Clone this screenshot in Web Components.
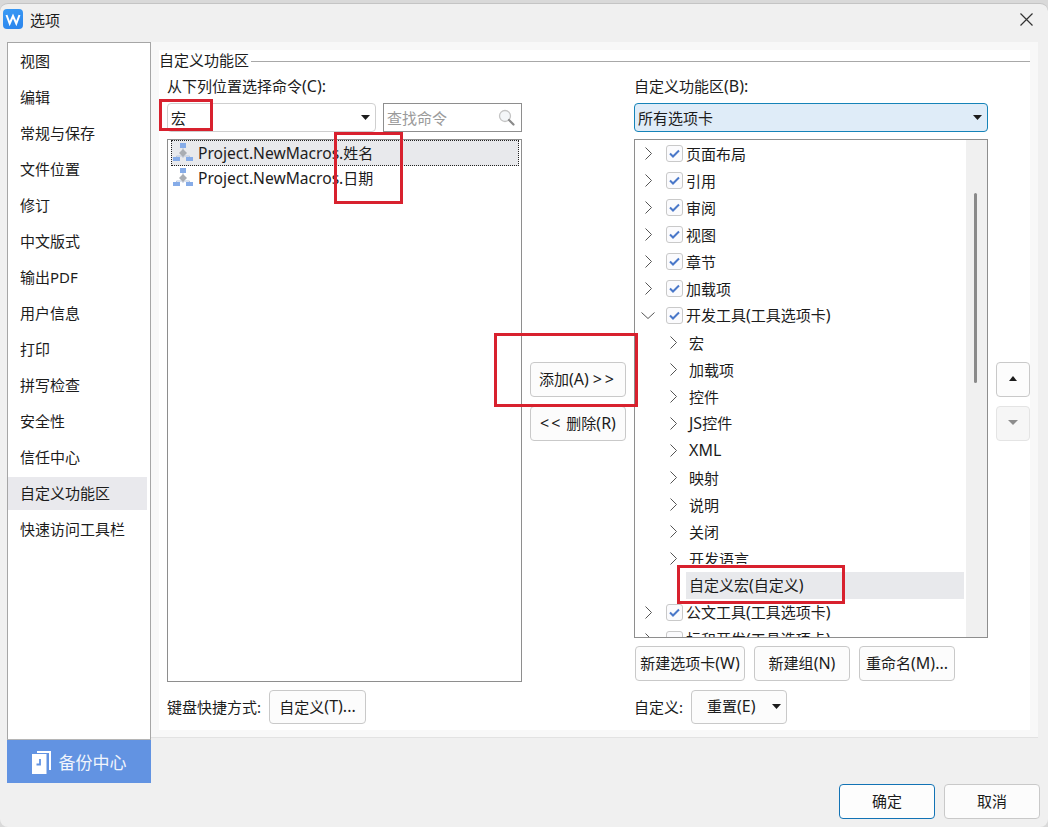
<!DOCTYPE html>
<html lang="zh-CN">
<head>
<meta charset="utf-8">
<title>选项</title>
<style>
    html, body {
        margin: 0;
        height: 100%;
    }
    body {
        background: #d9d9d9;
        color: #1c1c1c;
        font-family: "Noto Sans", "Noto Sans CJK SC", sans-serif;
        font-size: 15px;
        overflow: hidden;
    }
</style>
</head>
<body>
<wps-dialog></wps-dialog>
<script>
const CARET = `<svg width="9" height="5" viewBox="0 0 9 5" style="display:block"><path d="M0 0h9L4.5 5z" fill="currentColor"/></svg>`
const ARROW_UP = `<svg width="8" height="5" viewBox="0 0 8 5" style="display:block"><path d="M0 5h8L4 0z" fill="currentColor"/></svg>`
const ARROW_DOWN = `<svg width="10" height="5" viewBox="0 0 10 5" style="display:block"><path d="M0 0h10L5 5z" fill="currentColor"/></svg>`

// latin runs are wider in the reference than in the cjk font, so they get a bigger size
const lat = text => text.replace(/[!-~]+/g, run => `<span class="l">${run}</span>`)

class WpsAnnotation extends HTMLElement {
    constructor() {
        super()
        this.attachShadow({ mode: 'open' })
    }

    connectedCallback() {
        const [x, y, w, h] = this.getAttribute('box').split(',')
        this.shadowRoot.innerHTML = `
            <style>
                :host {
                    position: absolute;
                    left: ${x}px;
                    top: ${y}px;
                    width: ${w}px;
                    height: ${h}px;
                    box-sizing: border-box;
                    border: 3px solid #d8212e;
                    pointer-events: none;
                    z-index: 5;
                }
            </style>
        `
    }
}

class WpsButton extends HTMLElement {
    constructor() {
        super()
        this.attachShadow({ mode: 'open' })
        this.shadowRoot.innerHTML = `
            <style>
                :host {
                    display: flex;
                    align-items: center;
                    justify-content: center;
                    flex: none;
                    box-sizing: border-box;
                    height: 35px;
                    padding-bottom: 2px;
                    border: 1px solid #c9c9c9;
                    border-radius: 4px;
                    background: #fcfcfc;
                    white-space: nowrap;
                }
                :host([primary]) {
                    border-color: #1273b5;
                    background: #fdfdfd;
                }
                :host([disabled]) {
                    border-color: #e4e4e4;
                    background: #f6f6f6;
                    color: #8d8d8d;
                }
            </style>
            <slot></slot>
        `
    }
}

class WpsSelect extends HTMLElement {
    constructor() {
        super()
        this.attachShadow({ mode: 'open' })
        this.shadowRoot.innerHTML = `
            <style>
                :host {
                    display: flex;
                    align-items: center;
                    justify-content: space-between;
                    box-sizing: border-box;
                    height: 29px;
                    padding: 0 5px 1px 3px;
                    border: 1px solid #cfcfcf;
                    border-radius: 4px;
                    background: #fff;
                }
                :host([focused]) {
                    border-color: #1583b8;
                    background: #dfecf8;
                }
            </style>
            <slot></slot>
            ${CARET}
        `
    }
}

class WpsSearch extends HTMLElement {
    constructor() {
        super()
        this.attachShadow({ mode: 'open' })
        this.shadowRoot.innerHTML = `
            <style>
                :host {
                    display: flex;
                    align-items: center;
                    justify-content: space-between;
                    box-sizing: border-box;
                    width: 139px;
                    height: 29px;
                    padding: 0 6px 1px 3px;
                    border: 1px solid #8e8e8e;
                    background: #fff;
                    color: #9a9a9a;
                }
            </style>
            <span>查找命令</span>
            <svg width="17" height="17" viewBox="0 0 17 17">
                <circle cx="7" cy="7" r="5.5" fill="#f4f6f8" stroke="#c4c4c4" stroke-width="1.3"/>
                <path d="M11 11l4.5 4.5" stroke="#8a8a8a" stroke-width="2.2" stroke-linecap="round"/>
            </svg>
        `
    }
}

class WpsNavItem extends HTMLElement {
    constructor() {
        super()
        this.attachShadow({ mode: 'open' })
        this.shadowRoot.innerHTML = `
            <style>
                :host {
                    display: flex;
                    align-items: center;
                    box-sizing: border-box;
                    height: 36px;
                    padding: 0 0 2px 12px;
                }
                :host([selected]) {
                    background: linear-gradient(#e9e9ed, #e9e9ed) 0 2px / 139px 33px no-repeat;
                }
            </style>
            <slot></slot>
        `
    }
}

class WpsSidebar extends HTMLElement {
    constructor() {
        super()
        this.attachShadow({ mode: 'open' })
        const items = ['视图', '编辑', '常规与保存', '文件位置', '修订', '中文版式', '输出PDF', '用户信息', '打印', '拼写检查', '安全性', '信任中心', '自定义功能区', '快速访问工具栏']
        this.shadowRoot.innerHTML = `
            <style>
                :host {
                    display: flex;
                    flex-direction: column;
                    flex: none;
                    width: 144px;
                    margin-left: 7px;
                }
                .nav {
                    box-sizing: border-box;
                    height: 698px;
                    border: 1px solid #a6a6a6;
                    border-bottom-color: #b5b5b5;
                    background: #fff;
                }
                .backup {
                    display: flex;
                    align-items: center;
                    justify-content: center;
                    gap: 7px;
                    height: 43px;
                    background: #6293e2;
                    color: #f1f5fc;
                    font-size: 17px;
                }
            </style>
            <div class="nav">
                ${items.map(item => `<wps-nav-item ${item === '自定义功能区' ? 'selected' : ''}>${item}</wps-nav-item>`).join('')}
            </div>
            <div class="backup">
                <svg width="20" height="24" viewBox="0 0 20 24">
                    <path d="M5 1h14v19h-2V3H5z" fill="#fff"/>
                    <path d="M0 4h14.500v20H0z" fill="#fff"/>
                    <path d="M8 9v5.500H4.500" fill="none" stroke="#6293e2" stroke-width="1.800"/>
                </svg>
                <span>备份中心</span>
            </div>
        `
    }
}

class WpsTitlebar extends HTMLElement {
    constructor() {
        super()
        this.attachShadow({ mode: 'open' })
        this.shadowRoot.innerHTML = `
            <style>
                :host {
                    display: flex;
                    align-items: center;
                    flex: none;
                    box-sizing: border-box;
                    height: 38px;
                    padding: 0 15px 8px 3px;
                    gap: 7px;
                }
                .logo {
                    width: 20px;
                    height: 20px;
                    border-radius: 4px;
                    background: linear-gradient(160deg, #3a9bf5, #2b84ec);
                }
                .title {
                    flex: 1;
                }
            </style>
            <svg class="logo" viewBox="0 0 20 20">
                <path d="M3.500 6l3.200 8.500L10 7l3.300 7.500L16.500 6" fill="none" stroke="#fff" stroke-width="2"/>
            </svg>
            <span class="title">选项</span>
            <svg width="13" height="13" viewBox="0 0 13 13">
                <path d="M.5.500l12 12M12.500.500l-12 12" stroke="#333" stroke-width="1.200"/>
            </svg>
        `
    }
}

class WpsMacroRow extends HTMLElement {
    constructor() {
        super()
        this.attachShadow({ mode: 'open' })
        this.shadowRoot.innerHTML = `
            <style>
                :host {
                    display: flex;
                    align-items: center;
                    gap: 5px;
                    box-sizing: border-box;
                    height: 24px;
                    padding-left: 1px;
                    border: 1px solid transparent;
                }
                :host([active]) {
                    height: 26px;
                    border: 1px dotted #222;
                    background: #e8e9ec;
                }
            </style>
            <svg width="20" height="20" viewBox="0 0 20 20">
                <path d="M10 5v10M3.500 15v-2h13v2" fill="none" stroke="#b9c6dc" stroke-width="1"/>
                <rect x="7" y="0" width="6" height="5" fill="#86ace8"/>
                <path d="M10 6l4 4-4 4-4-4z" fill="#a9adb3"/>
                <rect x="0" y="14" width="7" height="4" fill="#86ace8"/>
                <rect x="13" y="14" width="7" height="4" fill="#86ace8"/>
            </svg>
            <span><slot></slot></span>
        `
    }
}

class WpsTreeRow extends HTMLElement {
    constructor() {
        super()
        this.attachShadow({ mode: 'open' })
    }

    connectedCallback() {
        const depth = Number(this.getAttribute('depth') || 0)
        const expanded = this.hasAttribute('expanded')
        const hasToggle = !this.hasAttribute('selected')
        const hasCheck = depth === 0

        const chevron = expanded
            ? `<svg width="14" height="7" viewBox="0 0 14 7"><path d="M.5.500L7 6.500 13.500.500" fill="none" stroke="#555" stroke-width="1"/></svg>`
            : `<svg width="7" height="13" viewBox="0 0 7 13"><path d="M.5.500L6.500 6.500.5 12.500" fill="none" stroke="#555" stroke-width="1"/></svg>`

        const checkbox = !hasCheck ? '' : `
            <span class="check ${this.hasAttribute('unchecked') ? 'off' : ''}">
                <svg width="15" height="15" viewBox="0 0 15 15"><path d="M3 7.500l3 3 6-6" fill="none" stroke="#4a78c9" stroke-width="2"/></svg>
            </span>`

        this.shadowRoot.innerHTML = `
            <style>
                :host {
                    display: flex;
                    align-items: center;
                    flex: none;
                    height: 27px;
                    padding-left: ${depth * 25}px;
                    white-space: nowrap;
                }
                :host([selected]) {
                    position: relative;
                    padding-left: 51px;
                }
                .toggle {
                    display: flex;
                    align-items: center;
                    justify-content: center;
                    flex: none;
                    width: 26px;
                    margin-right: ${hasCheck ? 5 : 3}px;
                }
                .check {
                    display: block;
                    flex: none;
                    box-sizing: border-box;
                    width: 17px;
                    height: 17px;
                    margin-right: 3px;
                    border: 1px solid #c9c9c9;
                    border-radius: 3px;
                    background: #fbfbfd;
                }
                .check svg {
                    display: block;
                }
                .check.off svg {
                    display: none;
                }
                .label {
                    flex: 1;
                    padding-bottom: 1px;
                }
                :host([selected]) .label {
                    margin-right: 2px;
                    padding: 0 0 0 3px;
                    line-height: 27px;
                    background: #e8e9ec;
                    box-shadow: 0 -8px 0 #fff;
                }
            </style>
            ${hasToggle ? `<span class="toggle">${chevron}</span>` : ''}
            ${checkbox}
            <span class="label"><slot></slot></span>
        `
    }
}

class WpsTree extends HTMLElement {
    constructor() {
        super()
        this.attachShadow({ mode: 'open' })
        this.shadowRoot.innerHTML = `
            <style>
                :host {
                    display: flex;
                    box-sizing: border-box;
                    height: 499px;
                    border: 1px solid #8e8e8e;
                    background: #fff;
                    overflow: hidden;
                }
                .rows {
                    display: flex;
                    flex-direction: column;
                    flex: 1;
                    min-width: 0;
                }
                .track {
                    flex: none;
                    width: 21px;
                    padding: 53px 0 0 8px;
                    box-sizing: border-box;
                    background: #f0f0f0;
                }
                .thumb {
                    width: 3px;
                    height: 190px;
                    border-radius: 2px;
                    background: #8a8a8a;
                }
            </style>
            <div class="rows"><slot></slot></div>
            <div class="track"><div class="thumb"></div></div>
        `
    }
}

class WpsCustomize extends HTMLElement {
    constructor() {
        super()
        this.attachShadow({ mode: 'open' })
        const top = ['页面布局', '引用', '审阅', '视图', '章节', '加载项']
        const groups = ['宏', '加载项', '控件', 'JS控件', 'XML', '映射', '说明', '关闭', '开发语言']
        this.shadowRoot.innerHTML = `
            <style>
                :host {
                    display: block;
                    position: relative;
                    box-sizing: border-box;
                    flex: none;
                    width: 887px;
                    height: 696px;
                    margin-right: 10px;
                    padding: 8px;
                    background: #f8f8f8;
                    border-bottom: 1px solid #e2e2e2;
                }
                .l {
                    font-size: 16px;
                }
                .macro {
                    font-size: 15.6px;
                }
                .wide {
                    letter-spacing: 3px;
                }
                .inner {
                    box-sizing: border-box;
                    height: 680px;
                    background: #fff;
                }
                .legend {
                    display: flex;
                    align-items: center;
                    gap: 2px;
                    height: 22px;
                    margin-bottom: 4px;
                }
                .legend span {
                    padding-bottom: 3px;
                }
                .legend::after {
                    content: '';
                    flex: 1;
                    height: 1px;
                    background: #a8a8a8;
                }
                .columns {
                    display: grid;
                    grid-template-columns: 355px 96px 354px 34px;
                    gap: 8px;
                    margin-left: 8px;
                    height: 648px;
                }
                .col {
                    display: flex;
                    flex-direction: column;
                    min-width: 0;
                }
                .label {
                    height: 22px;
                    line-height: 20px;
                    margin-bottom: 5px;
                }
                .pick {
                    display: flex;
                    gap: 7px;
                    margin-bottom: 7px;
                }
                .pick wps-select {
                    flex: 1;
                }
                .list {
                    box-sizing: border-box;
                    height: 543px;
                    padding: 0 2px 0 3px;
                    margin-bottom: 8px;
                    border: 1px solid #8e8e8e;
                    background: #fff;
                }
                .foot {
                    display: flex;
                    align-items: center;
                    gap: 8px;
                    height: 34px;
                }
                .foot > span {
                    padding-bottom: 2px;
                }
                .foot wps-button {
                    height: 34px;
                    width: 97px;
                }
                .stack {
                    display: flex;
                    flex-direction: column;
                    gap: 9px;
                    padding-top: 286px;
                }
                .right-select {
                    margin-bottom: 7px;
                }
                .actions {
                    display: flex;
                    gap: 9px;
                    height: 35px;
                    margin: 8px 0 9px 1px;
                }
                .foot .reset {
                    justify-content: flex-start;
                    gap: 16px;
                    padding-left: 15px;
                    width: 96px;
                }
                .reset svg {
                    margin-top: 1px;
                }
            </style>
            <div class="inner">
                <div class="legend"><span>自定义功能区</span></div>
                <div class="columns">
                    <div class="col">
                        <div class="label">${lat('从下列位置选择命令(C):')}</div>
                        <div class="pick">
                            <wps-select>宏</wps-select>
                            <wps-search></wps-search>
                        </div>
                        <div class="list">
                            <wps-macro-row active><span class="macro">Project.NewMacros.</span>姓名</wps-macro-row>
                            <wps-macro-row><span class="macro">Project.NewMacros.</span>日期</wps-macro-row>
                        </div>
                        <div class="foot">
                            <span>键盘快捷方式:</span>
                            <wps-button>${lat('自定义(T)...')}</wps-button>
                        </div>
                    </div>
                    <div class="stack">
                        <wps-button><span>${lat('添加(A)')} <span class="l wide">&gt;&gt;</span></span></wps-button>
                        <wps-button><span><span class="l" style="letter-spacing:2px">&lt;&lt;</span> ${lat('删除(R)')}</span></wps-button>
                    </div>
                    <div class="col">
                        <div class="label">${lat('自定义功能区(B):')}</div>
                        <wps-select class="right-select" focused>所有选项卡</wps-select>
                        <wps-tree>
                            ${top.map(name => `<wps-tree-row>${name}</wps-tree-row>`).join('')}
                            <wps-tree-row expanded>${lat('开发工具(工具选项卡)')}</wps-tree-row>
                            ${groups.map(name => `<wps-tree-row depth="1">${lat(name)}</wps-tree-row>`).join('')}
                            <wps-tree-row depth="1" selected>${lat('自定义宏(自定义)')}</wps-tree-row>
                            <wps-tree-row>${lat('公文工具(工具选项卡)')}</wps-tree-row>
                            <wps-tree-row unchecked>${lat('标和开发(工具选项卡)')}</wps-tree-row>
                        </wps-tree>
                        <div class="actions">
                            <wps-button style="width:110px">${lat('新建选项卡(W)')}</wps-button>
                            <wps-button style="width:96px">${lat('新建组(N)')}</wps-button>
                            <wps-button style="width:96px">${lat('重命名(M)...')}</wps-button>
                        </div>
                        <div class="foot">
                            <span>自定义:</span>
                            <wps-button class="reset"><span>${lat('重置(E)')}</span>${CARET}</wps-button>
                        </div>
                    </div>
                    <div class="stack">
                        <wps-button>${ARROW_UP}</wps-button>
                        <wps-button disabled>${ARROW_DOWN}</wps-button>
                    </div>
                </div>
            </div>
        `
    }
}

class WpsDialog extends HTMLElement {
    constructor() {
        super()
        this.attachShadow({ mode: 'open' })
        this.shadowRoot.innerHTML = `
            <style>
                :host {
                    display: flex;
                    flex-direction: column;
                    position: relative;
                    box-sizing: border-box;
                    height: 824px;
                    margin-top: 3px;
                    border-top: 1px solid #c4c4c4;
                    border-radius: 8px;
                    background: #f0f0f0;
                    overflow: hidden;
                }
                .body {
                    display: flex;
                    flex: 1;
                }
                .main {
                    display: flex;
                    flex-direction: column;
                    flex: 1;
                    min-width: 0;
                }
                .footer {
                    display: flex;
                    justify-content: flex-end;
                    gap: 9px;
                    margin-top: 46px;
                    padding-right: 8px;
                }
                .footer wps-button {
                    width: 96px;
                }
            </style>
            <wps-titlebar></wps-titlebar>
            <div class="body">
                <wps-sidebar></wps-sidebar>
                <div class="main">
                    <wps-customize></wps-customize>
                    <div class="footer">
                        <wps-button primary>确定</wps-button>
                        <wps-button>取消</wps-button>
                    </div>
                </div>
            </div>
            <wps-annotation box="159,95,54,32"></wps-annotation>
            <wps-annotation box="334,128,69,72"></wps-annotation>
            <wps-annotation box="494,329,144,74"></wps-annotation>
            <wps-annotation box="677,561,168,39"></wps-annotation>
        `
    }
}

customElements.define('wps-annotation', WpsAnnotation)
customElements.define('wps-button', WpsButton)
customElements.define('wps-select', WpsSelect)
customElements.define('wps-search', WpsSearch)
customElements.define('wps-nav-item', WpsNavItem)
customElements.define('wps-sidebar', WpsSidebar)
customElements.define('wps-titlebar', WpsTitlebar)
customElements.define('wps-macro-row', WpsMacroRow)
customElements.define('wps-tree-row', WpsTreeRow)
customElements.define('wps-tree', WpsTree)
customElements.define('wps-customize', WpsCustomize)
customElements.define('wps-dialog', WpsDialog)
</script>
</body>
</html>
